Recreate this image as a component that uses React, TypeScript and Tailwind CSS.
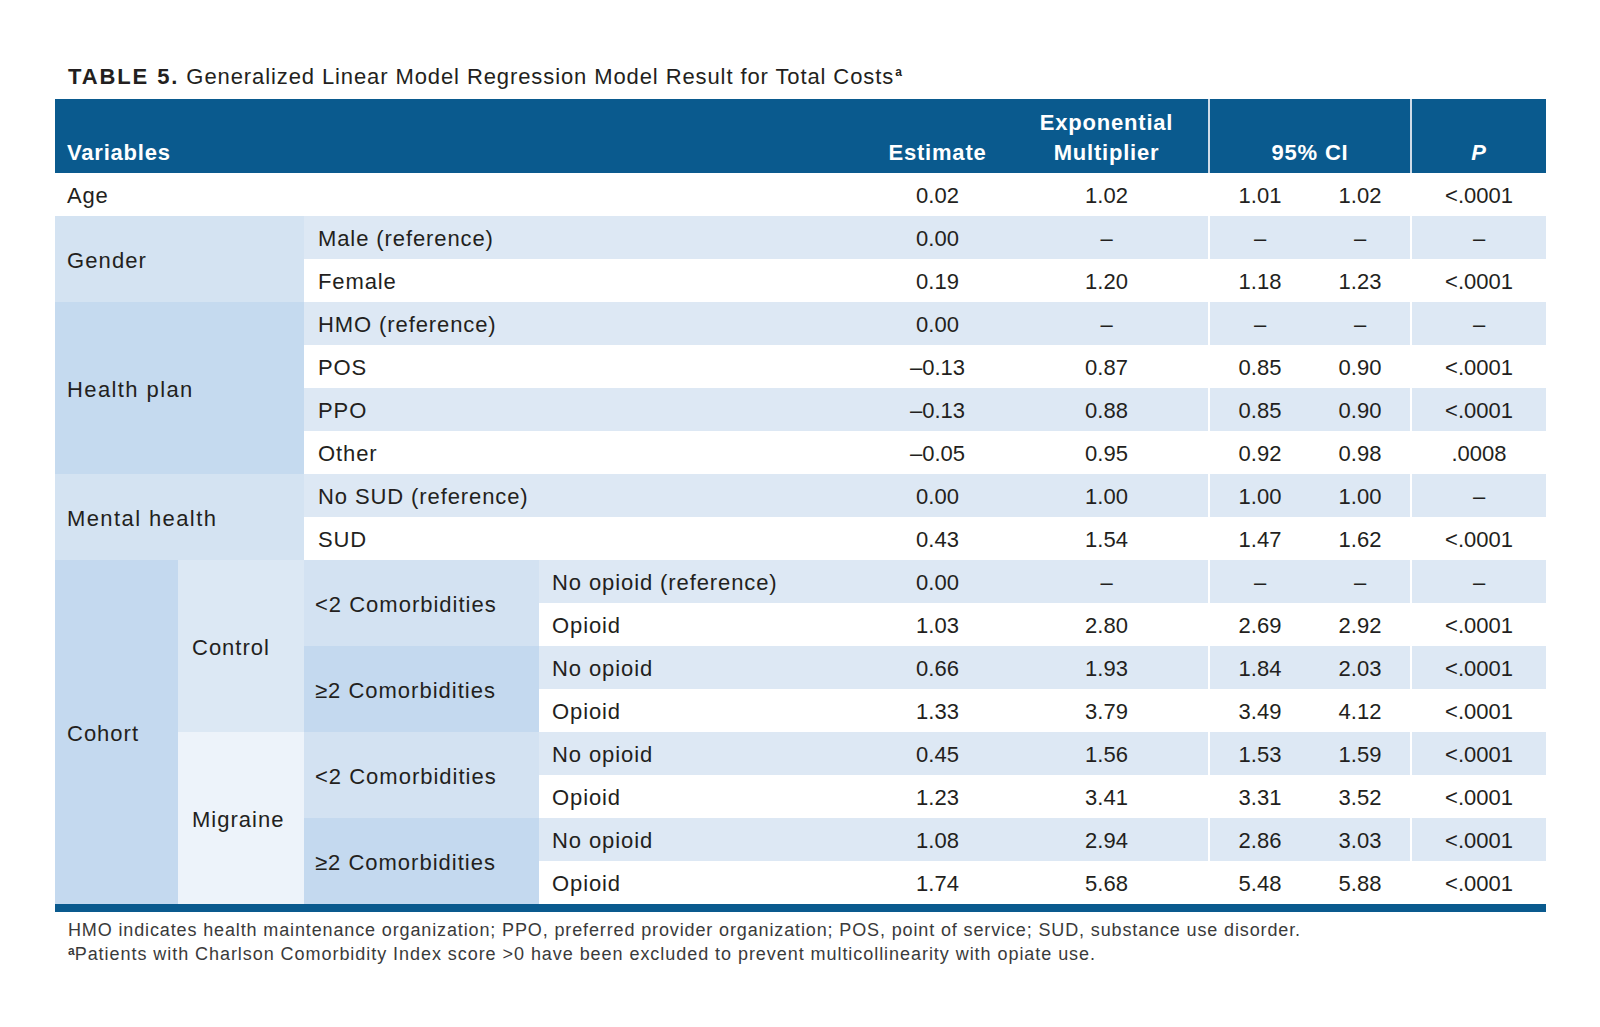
import React from 'react';

type Row = {
  est: string;
  exp: string;
  lo: string;
  hi: string;
  p: string;
};

const font = { fontFamily: '"Liberation Sans", Arial, sans-serif' };

function Nums({ r }: { r: Row }) {
  return (
    <>
      <td className="text-center">{r.est}</td>
      <td className="text-center">{r.exp}</td>
      <td className="border-l-2 border-white text-center">{r.lo}</td>
      <td className="text-center">{r.hi}</td>
      <td className="border-l-2 border-white text-center">{r.p}</td>
    </>
  );
}

const stripe = (s: boolean) => (s ? 'bg-[#dde8f4]' : 'bg-white');

export default function App() {
  return (
    <div className="w-[1600px] h-[1027px] bg-white text-[#231f20] pl-[55px] pt-[62px]" style={font}>
      <h2 className="pl-[13px] text-[22px] leading-[30px] tracking-[0.9px] mb-[7px]">
        <span className="font-bold tracking-[1.9px]">TABLE 5.</span> Generalized Linear Model Regression Model Result for Total Costs
        <span className="inline-block text-[12px] font-bold leading-none -translate-y-[8px] ml-[1px]">a</span>
      </h2>

      <table className="w-[1491px] table-fixed border-collapse text-[22px]">
        <colgroup>
          <col className="w-[123px]" />
          <col className="w-[126px]" />
          <col className="w-[235px]" />
          <col className="w-[331px]" />
          <col className="w-[135px]" />
          <col className="w-[204px]" />
          <col className="w-[101px]" />
          <col className="w-[101px]" />
          <col className="w-[135px]" />
        </colgroup>
        <thead>
          <tr className="h-[74px] bg-[#0a5a8e] text-white font-bold text-[22px] leading-[30px] tracking-[0.8px]">
            <th colSpan={4} className="text-left align-bottom pl-3 pb-[5px]">Variables</th>
            <th className="align-bottom pb-[5px]">Estimate</th>
            <th className="align-bottom pb-[5px]">
              Exponential
              <br />
              Multiplier
            </th>
            <th colSpan={2} className="align-bottom pb-[5px] border-l-2 border-[#cfdbe7]">95% CI</th>
            <th className="align-bottom pb-[5px] italic border-l-2 border-[#cfdbe7]">P</th>
          </tr>
        </thead>
        <tbody className="[&>tr>td]:pt-[3px] [&>tr>td]:leading-[40px]">
          <tr className="h-[43px] bg-white">
            <td colSpan={4} className="pl-3 tracking-[0.8px]">Age</td>
            <Nums r={{ est: '0.02', exp: '1.02', lo: '1.01', hi: '1.02', p: '<.0001' }} />
          </tr>

          <tr className={`h-[43px] ${stripe(true)}`}>
            <td colSpan={2} rowSpan={2} className="bg-[#d4e3f2] pl-3 tracking-[1.1px]">Gender</td>
            <td colSpan={2} className="pl-[14px] tracking-[0.9px]">Male (reference)</td>
            <Nums r={{ est: '0.00', exp: '–', lo: '–', hi: '–', p: '–' }} />
          </tr>
          <tr className={`h-[43px] ${stripe(false)}`}>
            <td colSpan={2} className="pl-[14px] tracking-[0.9px]">Female</td>
            <Nums r={{ est: '0.19', exp: '1.20', lo: '1.18', hi: '1.23', p: '<.0001' }} />
          </tr>

          <tr className={`h-[43px] ${stripe(true)}`}>
            <td colSpan={2} rowSpan={4} className="bg-[#c5daef] pl-3 tracking-[1.4px]">Health plan</td>
            <td colSpan={2} className="pl-[14px] tracking-[0.9px]">HMO (reference)</td>
            <Nums r={{ est: '0.00', exp: '–', lo: '–', hi: '–', p: '–' }} />
          </tr>
          <tr className={`h-[43px] ${stripe(false)}`}>
            <td colSpan={2} className="pl-[14px] tracking-[0.9px]">POS</td>
            <Nums r={{ est: '–0.13', exp: '0.87', lo: '0.85', hi: '0.90', p: '<.0001' }} />
          </tr>
          <tr className={`h-[43px] ${stripe(true)}`}>
            <td colSpan={2} className="pl-[14px] tracking-[0.9px]">PPO</td>
            <Nums r={{ est: '–0.13', exp: '0.88', lo: '0.85', hi: '0.90', p: '<.0001' }} />
          </tr>
          <tr className={`h-[43px] ${stripe(false)}`}>
            <td colSpan={2} className="pl-[14px] tracking-[0.9px]">Other</td>
            <Nums r={{ est: '–0.05', exp: '0.95', lo: '0.92', hi: '0.98', p: '.0008' }} />
          </tr>

          <tr className={`h-[43px] ${stripe(true)}`}>
            <td colSpan={2} rowSpan={2} className="bg-[#d4e3f2] pl-3 tracking-[1.4px]">Mental health</td>
            <td colSpan={2} className="pl-[14px] tracking-[0.9px]">No SUD (reference)</td>
            <Nums r={{ est: '0.00', exp: '1.00', lo: '1.00', hi: '1.00', p: '–' }} />
          </tr>
          <tr className={`h-[43px] ${stripe(false)}`}>
            <td colSpan={2} className="pl-[14px] tracking-[0.9px]">SUD</td>
            <Nums r={{ est: '0.43', exp: '1.54', lo: '1.47', hi: '1.62', p: '<.0001' }} />
          </tr>

          <tr className={`h-[43px] ${stripe(true)}`}>
            <td rowSpan={8} className="bg-[#c4d9ef] pl-3 tracking-[1px]">Cohort</td>
            <td rowSpan={4} className="bg-[#dce8f4] pl-[14px] tracking-[1px]">Control</td>
            <td rowSpan={2} className="bg-[#d3e2f2] pl-[11px] tracking-[1px]">&lt;2 Comorbidities</td>
            <td className="pl-[13px] tracking-[0.9px]">No opioid (reference)</td>
            <Nums r={{ est: '0.00', exp: '–', lo: '–', hi: '–', p: '–' }} />
          </tr>
          <tr className={`h-[43px] ${stripe(false)}`}>
            <td className="pl-[13px] tracking-[0.9px]">Opioid</td>
            <Nums r={{ est: '1.03', exp: '2.80', lo: '2.69', hi: '2.92', p: '<.0001' }} />
          </tr>
          <tr className={`h-[43px] ${stripe(true)}`}>
            <td rowSpan={2} className="bg-[#c4d9ef] pl-[11px] tracking-[1px]">≥2 Comorbidities</td>
            <td className="pl-[13px] tracking-[0.9px]">No opioid</td>
            <Nums r={{ est: '0.66', exp: '1.93', lo: '1.84', hi: '2.03', p: '<.0001' }} />
          </tr>
          <tr className={`h-[43px] ${stripe(false)}`}>
            <td className="pl-[13px] tracking-[0.9px]">Opioid</td>
            <Nums r={{ est: '1.33', exp: '3.79', lo: '3.49', hi: '4.12', p: '<.0001' }} />
          </tr>

          <tr className={`h-[43px] ${stripe(true)}`}>
            <td rowSpan={4} className="bg-[#edf3fa] pl-[14px] tracking-[1px]">Migraine</td>
            <td rowSpan={2} className="bg-[#d3e2f2] pl-[11px] tracking-[1px]">&lt;2 Comorbidities</td>
            <td className="pl-[13px] tracking-[0.9px]">No opioid</td>
            <Nums r={{ est: '0.45', exp: '1.56', lo: '1.53', hi: '1.59', p: '<.0001' }} />
          </tr>
          <tr className={`h-[43px] ${stripe(false)}`}>
            <td className="pl-[13px] tracking-[0.9px]">Opioid</td>
            <Nums r={{ est: '1.23', exp: '3.41', lo: '3.31', hi: '3.52', p: '<.0001' }} />
          </tr>
          <tr className={`h-[43px] ${stripe(true)}`}>
            <td rowSpan={2} className="bg-[#c4d9ef] pl-[11px] tracking-[1px]">≥2 Comorbidities</td>
            <td className="pl-[13px] tracking-[0.9px]">No opioid</td>
            <Nums r={{ est: '1.08', exp: '2.94', lo: '2.86', hi: '3.03', p: '<.0001' }} />
          </tr>
          <tr className={`h-[43px] ${stripe(false)}`}>
            <td className="pl-[13px] tracking-[0.9px]">Opioid</td>
            <Nums r={{ est: '1.74', exp: '5.68', lo: '5.48', hi: '5.88', p: '<.0001' }} />
          </tr>
        </tbody>
      </table>
      <div className="w-[1491px] h-[8px] bg-[#0a5a8e]" />

      <div className="pl-[13px] pt-[6px] text-[18px] leading-[24px] tracking-[0.87px] text-[#3a3a3a]">
        <p>HMO indicates health maintenance organization; PPO, preferred provider organization; POS, point of service; SUD, substance use disorder.</p>
        <p className="tracking-[0.95px]">
          <span className="inline-block text-[12px] font-bold leading-none -translate-y-[5px] tracking-normal">a</span>Patients with Charlson Comorbidity Index score &gt;0 have been excluded to prevent multicollinearity with opiate use.
        </p>
      </div>
    </div>
  );
}
